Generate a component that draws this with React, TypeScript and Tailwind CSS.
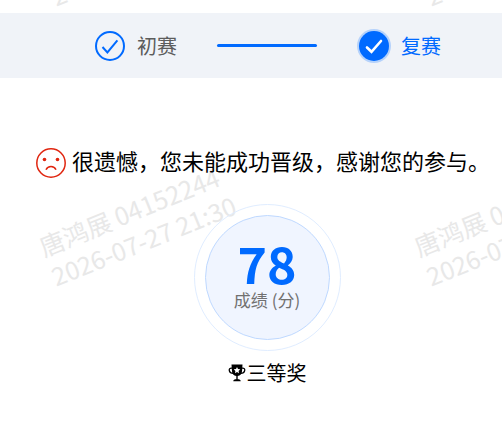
// watermark: tiled user info, starts above the visible area
const watermarkTiles = [
    { id: "top-left", place: "left-[39px] -top-[87px]" },
    { id: "top-right", place: "left-[414px] -top-[87px]" },
    { id: "left", place: "left-[39px] top-[193px]" },
    { id: "right", place: "left-[414px] top-[193px]" },
];

// component: watermark text behind the content
const Watermark = () => (
    <div aria-hidden="true" className="absolute inset-0 overflow-hidden pointer-events-none select-none">
        {watermarkTiles.map((tile) => (
            <div
                key={tile.id}
                className={`absolute ${tile.place} -rotate-22 whitespace-nowrap text-[25px] leading-8 text-[#e8e8e8]`}
            >
                <p>唐鸿展 04152244</p>
                <p>2026-07-27 21:30</p>
            </div>
        ))}
    </div>
);

// component: competition steps at the top
const Steps = () => (
    <ol className="relative mt-[13px] flex h-[65px] items-center justify-center gap-10 bg-[#f0f3f8] pl-[34px] text-xl">
        <li className="flex items-center gap-3 text-[#5c5c5c]">
            <svg viewBox="0 0 30 30" className="size-[30px]" fill="none" stroke="#006aff" strokeWidth="2">
                <circle cx="15" cy="15" r="14" />
                <path d="M7.5 16 12.4 21.4 22.4 9.4" />
            </svg>
            <span>初赛</span>
        </li>
        <li aria-hidden="true" className="h-[3px] w-[100px] rounded-full bg-[#006aff]"></li>
        <li className="flex items-center gap-[10px] text-[#006aff]" aria-current="step">
            <svg viewBox="0 0 34 34" className="size-[34px]" fill="none">
                <circle cx="17" cy="17" r="17" fill="#b5d2fb" />
                <circle cx="17" cy="17" r="15" fill="#006aff" />
                <path d="M10 18.5 14.5 22.8 24 12" stroke="#fff" strokeWidth="2.6" strokeLinecap="round" />
            </svg>
            <span>复赛</span>
        </li>
    </ol>
);

const SadFace = () => (
    <svg viewBox="0 0 30 30" className="size-[30px] shrink-0" fill="none" stroke="#e0250f">
        <circle cx="15" cy="15" r="14.2" strokeWidth="1.5" />
        <circle cx="8.5" cy="11.5" r="1.8" fill="#e0250f" stroke="none" />
        <circle cx="21.5" cy="11.5" r="1.8" fill="#e0250f" stroke="none" />
        <path d="M10 21.8C12 17.4 18 17.4 20 21.8" strokeWidth="1.5" />
    </svg>
);

const Trophy = () => (
    <svg viewBox="0 0 18 18" className="size-[18px]">
        <path d="M4.2 4.2C1.8 3.8 1 5 1.3 6.6 1.7 8.6 3.2 9.3 5.4 9.3M13.8 4.2c2.4-.4 3.2.8 2.9 2.4-.4 2-1.9 2.7-4.1 2.7" fill="none" stroke="#000" strokeWidth="1.3" />
        <path d="M3.5.5h11l-.5 6.8c0 2.6-1.8 4.2-4.3 4.8v3.2c1.8 0 3 .5 3 2H5.3c0-1.5 1.2-2 3-2v-3.2C5.8 11.5 4 9.9 4 7.3Z" />
        <path d="m9 2.9 1 2.1 2.3.3-1.7 1.6.4 2.3-2-1.1-2 1.1.4-2.3-1.7-1.6L8 5Z" fill="#fff" />
    </svg>
);

const App = () => {
    return (
        <div className="relative flow-root min-h-screen bg-white text-black font-['Noto_Sans_CJK_SC',sans-serif]">
            <Watermark />
            <Steps />

            <main className="relative flex flex-col items-center pl-8 pt-[66px]">
                <div className="flex items-center gap-[6px] pr-2">
                    <SadFace />
                    <h1 className="whitespace-nowrap pb-[6px] text-[22px] leading-8">很遗憾，您未能成功晋级，感谢您的参与。</h1>
                </div>

                {/* score */}
                <section className="mt-[22px] rounded-full border border-[#e0edff] p-[10px]">
                    <div className="flex size-[125px] flex-col items-center justify-center rounded-full border border-[#bfd9ff] bg-[#f0f5ff]">
                        <strong className="mb-2 text-[50px] leading-9 font-bold text-[#006aff]">78</strong>
                        <span className="text-[17px] leading-6 text-[#707070]">成绩 (分)</span>
                    </div>
                </section>

                <p className="mt-2 flex items-center gap-px text-xl">
                    <Trophy />
                    三等奖
                </p>
            </main>
        </div>
    );
};

export default App;
